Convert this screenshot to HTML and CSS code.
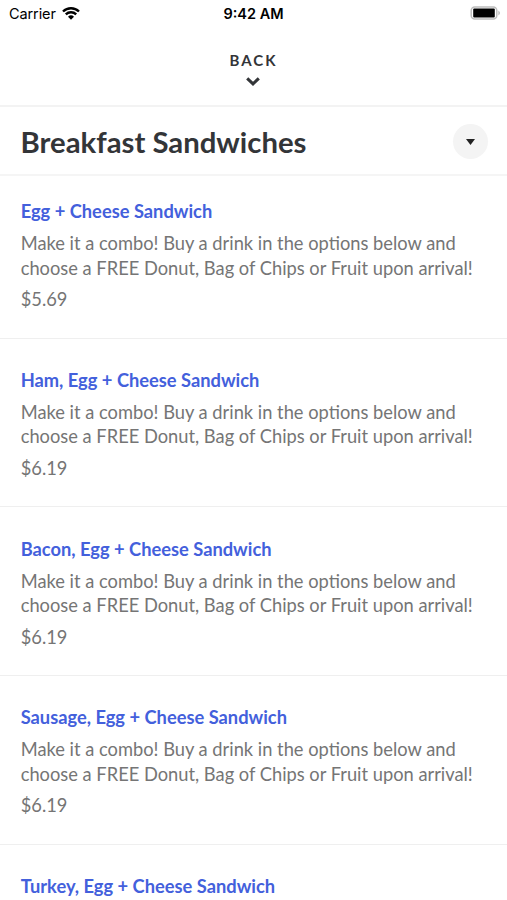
FILE: index.html
```html
<!DOCTYPE html>
<html lang="en">
<head>
<meta charset="utf-8">
<title>Breakfast Sandwiches</title>
<link rel="stylesheet" href="styles.css">
</head>
<body>
<div class="status">
  <div class="carrier"><span>Carrier</span>
    <svg class="wifi" viewBox="0 0 18 13"><path d="M1 4.500a11.500 11.500 0 0 1 16 0M3.800 7.400a7.500 7.500 0 0 1 10.400 0"/><path class="dot" d="M6 9.700a4.300 4.300 0 0 1 6 0L9 12.800z"/></svg>
  </div>
  <div class="time">9:42 AM</div>
  <svg class="battery" viewBox="0 0 31 14"><rect class="case" x="1.200" y="1" width="25.600" height="12" rx="3.500"/><rect x="3.200" y="2.500" width="21.600" height="9" rx="1"/><path class="cap" d="M28.300 4.500q3.500 2.500 0 5z"/></svg>
</div>
<header class="back"><span>BACK</span>
  <svg class="chevron" viewBox="0 0 14 9"><path d="M1.200 1.300L7 6.900l5.800-5.600"/></svg>
</header>
<div class="heading"><h1>Breakfast Sandwiches</h1>
  <button class="more" aria-label="Categories"><svg viewBox="0 0 9 6"><path d="M0 0h9L4.500 6z"/></svg></button>
</div>
<main>
  <article><h2>Egg + Cheese Sandwich</h2><p>Make it a combo! Buy a drink in the options below and<br>choose a FREE Donut, Bag of Chips or Fruit upon arrival!</p><div class="price">$5.69</div></article>
  <article><h2>Ham, Egg + Cheese Sandwich</h2><p>Make it a combo! Buy a drink in the options below and<br>choose a FREE Donut, Bag of Chips or Fruit upon arrival!</p><div class="price">$6.19</div></article>
  <article><h2>Bacon, Egg + Cheese Sandwich</h2><p>Make it a combo! Buy a drink in the options below and<br>choose a FREE Donut, Bag of Chips or Fruit upon arrival!</p><div class="price">$6.19</div></article>
  <article><h2>Sausage, Egg + Cheese Sandwich</h2><p>Make it a combo! Buy a drink in the options below and<br>choose a FREE Donut, Bag of Chips or Fruit upon arrival!</p><div class="price">$6.19</div></article>
  <article><h2>Turkey, Egg + Cheese Sandwich</h2></article>
</main>
</body>
</html>
```
FILE: styles.css
```css
* { box-sizing: border-box; }
body { margin: 0; background: #fff; color: #333538; font-family: Lato, sans-serif; }
.status { height: 27px; display: grid; grid-template-columns: 1fr auto 1fr; align-items: center; padding: 0 6px 0 9px; font: 14.5px Inter, sans-serif; color: #000; }
.carrier { display: flex; align-items: center; gap: 6px; letter-spacing: -.1px; }
.wifi { width: 18px; height: 13px; margin-top: -1px; fill: none; stroke: #000; stroke-width: 2.4; }
.wifi .dot { fill: #000; stroke: none; }
.time { margin-right: 3px; font-weight: 600; }
.battery { width: 31px; height: 14px; margin-top: -1px; justify-self: end; }
.case { fill: none; stroke: #bdbdbd; stroke-width: 1.5; }
.cap { fill: #bdbdbd; }
.back { height: 80px; border-bottom: 2px solid #f3f3f3; display: flex; flex-direction: column; align-items: center; padding-top: 23px; font-size: 15px; line-height: 20px; font-weight: 700; letter-spacing: 2px; }
.chevron { width: 14px; height: 9px; margin: 7px 1px 0 0; fill: none; stroke: #333538; stroke-width: 3; }
.heading { height: 69px; border-bottom: 2px solid #f5f5f5; display: flex; align-items: center; justify-content: space-between; padding: 2px 19px 0 20.5px; }
h1 { margin: 0; font-size: 29.3px; line-height: 36px; font-weight: 700; }
.more { width: 35px; height: 35px; padding: 0; border: 0; border-radius: 50%; background: #f4f4f4; display: grid; place-items: center; }
.more svg { width: 9px; height: 6px; fill: #222; }
article { height: 168.6px; padding: 28.2px 20.7px 0; border-bottom: 1px solid #efefef; color: #757575; font-size: 18.3px; line-height: 24.5px; }
article:first-child { height: 162.8px; padding-top: 22.4px; }
article:last-child { height: auto; border: 0; }
h2 { margin: 0; font-size: 18.3px; line-height: 26px; font-weight: 700; color: #4360dc; }
p { margin: 7px 0 0; white-space: nowrap; }
.price { margin-top: 7px; }
```
